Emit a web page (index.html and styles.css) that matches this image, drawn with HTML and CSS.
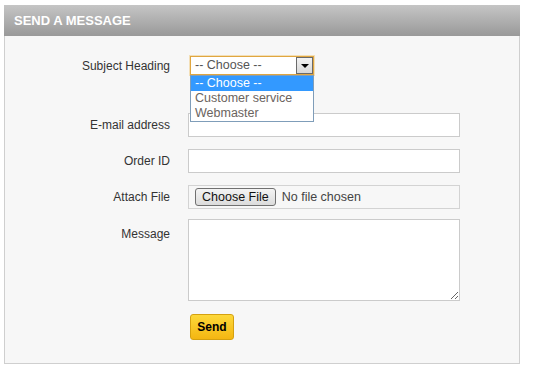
FILE: index.html
```html
<!DOCTYPE html>
<html lang="en">
<head>
    <meta charset="UTF-8">
    <title>Send a message</title>
    <link rel="stylesheet" href="styles.css">
</head>
<body>
    <div class="contact-box">
        <h3 class="box-title">Send a message</h3>
        <form class="contact-form">
            <div class="form-row row-subject">
                <label class="form-label">Subject Heading</label>
                <div class="fake-select">
                    <span class="select-value">-- Choose --</span>
                    <span class="select-arrow"></span>
                    <ul class="select-list">
                        <li class="selected">-- Choose --</li>
                        <li>Customer service</li>
                        <li>Webmaster</li>
                    </ul>
                </div>
            </div>
            <div class="form-row">
                <label class="form-label">E-mail address</label>
                <input class="text-input" type="text">
            </div>
            <div class="form-row">
                <label class="form-label">Order ID</label>
                <input class="text-input" type="text">
            </div>
            <div class="form-row row-file">
                <label class="form-label">Attach File</label>
                <div class="file-field">
                    <span class="file-button">Choose File</span>
                    <span class="file-name">No file chosen</span>
                </div>
            </div>
            <div class="form-row row-message">
                <label class="form-label">Message</label>
                <textarea class="message-input"></textarea>
            </div>
            <div class="form-row row-submit">
                <span class="form-label"></span>
                <button class="send-button" type="button">Send</button>
            </div>
        </form>
    </div>
</body>
</html>
```

FILE: styles.css
```css
body {
    margin: 0;
    padding: 5px 0 0 4px;
    background: #fff;
    font-family: "Liberation Sans", Arial, sans-serif;
    font-size: 12px;
    color: #333;
}
.contact-box {
    width: 514px;
    border: 1px solid #cfcfcf;
    border-top: none;
    background: #f7f7f7;
}
.box-title {
    margin: 0 -1px;
    height: 31px;
    line-height: 31px;
    padding-left: 10px;
    background: linear-gradient(#c5c5c5, #999);
    color: #fff;
    font-size: 13px;
    font-weight: bold;
    text-transform: uppercase;
}
.contact-form {
    padding: 20px 0 23px 0;
}
.form-row {
    display: flex;
    align-items: center;
    margin-bottom: 12px;
}
.row-subject {
    margin-bottom: 38px;
}
.row-file {
    margin-bottom: 10px;
}
.row-message {
    align-items: flex-start;
    margin-bottom: 13px;
}
.row-message .form-label {
    padding-top: 8px;
}
.row-submit {
    margin-bottom: 0;
}
.form-label {
    width: 165px;
    flex-shrink: 0;
    text-align: right;
    margin-right: 18px;
    color: #333;
}
.fake-select {
    position: relative;
    width: 124px;
    height: 19px;
    margin-left: 2px;
    box-sizing: border-box;
    border: 1px solid #e0a640;
    box-shadow: 0 0 0 1px rgba(240, 200, 120, 0.5);
    background: #fff;
    font-size: 12.5px;
}
.select-value {
    display: block;
    line-height: 17px;
    padding-left: 4px;
    color: #555;
}
.select-arrow {
    position: absolute;
    top: 0;
    right: 0;
    width: 15px;
    height: 15px;
    border: 1px solid #6a6a6a;
    background: linear-gradient(#f2f2f2, #d8d8d8);
}
.select-arrow::after {
    content: "";
    position: absolute;
    left: 4px;
    top: 6px;
    border-left: 4px solid transparent;
    border-right: 4px solid transparent;
    border-top: 4px solid #000;
}
.select-list {
    position: absolute;
    top: 18px;
    left: -1px;
    width: 124px;
    box-sizing: border-box;
    margin: 0;
    padding: 0;
    list-style: none;
    border: 1px solid #7f9db9;
    background: #fff;
    z-index: 2;
}
.select-list li {
    height: 15px;
    line-height: 15px;
    padding-left: 4px;
    color: #6b6460;
}
.select-list li.selected {
    background: #3399ff;
    color: #fff;
}
.text-input {
    width: 272px;
    height: 24px;
    box-sizing: border-box;
    margin: 0;
    border: 1px solid #cbcbcb;
    background: #fff;
    outline: none;
}
.file-field {
    width: 272px;
    height: 24px;
    box-sizing: border-box;
    border: 1px solid #d3d3d3;
    display: flex;
    align-items: center;
    padding-left: 6px;
}
.file-button {
    height: 18px;
    line-height: 16px;
    box-sizing: border-box;
    padding: 0 6px;
    border: 1px solid #707070;
    border-radius: 3px;
    background: linear-gradient(#f4f4f4, #dcdcdc);
    color: #111;
    font-size: 12.5px;
}
.file-name {
    margin-left: 6px;
    color: #444;
    font-size: 12.5px;
}
.message-input {
    width: 272px;
    height: 82px;
    box-sizing: border-box;
    margin: 0;
    border: 1px solid #cbcbcb;
    background: #fff;
    outline: none;
    resize: both;
}
.send-button {
    margin-left: 2px;
    width: 44px;
    height: 26px;
    padding: 0;
    border: 1px solid #d5a110;
    border-radius: 3px;
    background: linear-gradient(#fdd83a, #f4b612);
    color: #000;
    font-family: "Liberation Sans", Arial, sans-serif;
    font-size: 12px;
    font-weight: bold;
}
```
